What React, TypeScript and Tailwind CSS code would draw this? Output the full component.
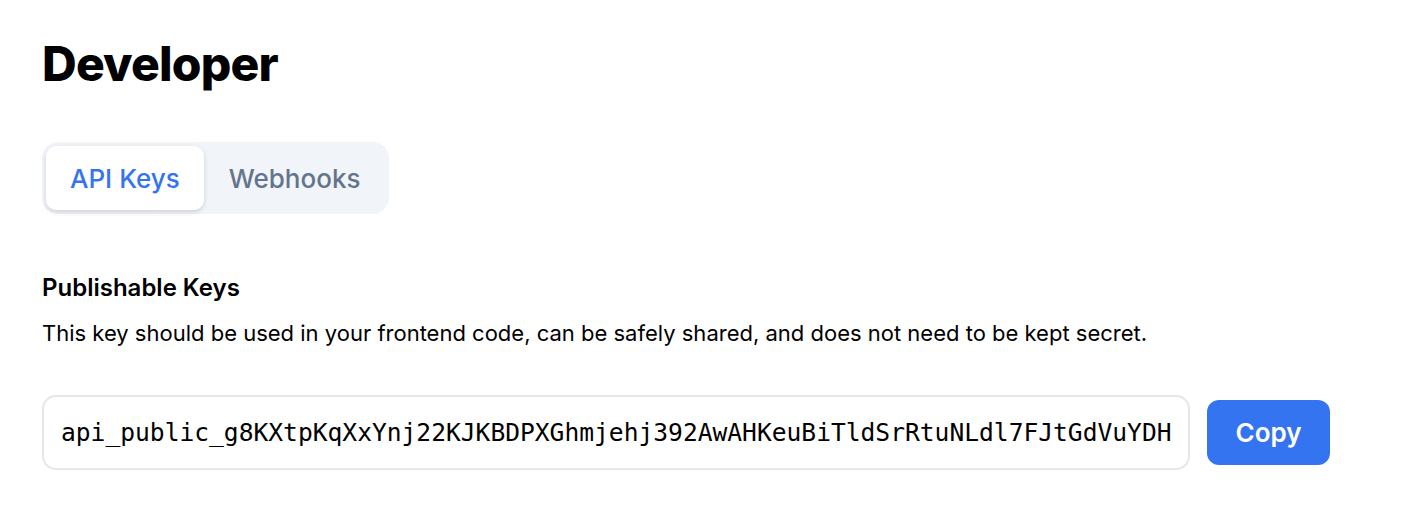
import { useState } from 'react';

const API_KEY = 'api_public_g8KXtpKqXxYnj22KJKBDPXGhmjehj392AwAHKeuBiTldSrRtuNLdl7FJtGdVuYDH';

const App = () => {
  const [tab, setTab] = useState<'keys' | 'webhooks'>('keys');

  return (
    <div className="min-h-screen bg-white px-[42px] pt-[40px] font-['Inter',sans-serif] text-black">
      {/* Header */}
      <h1 className="text-[48px] leading-[48px] font-extrabold tracking-[-0.8px]">Developer</h1>

      {/* Tabs */}
      <div className="mt-[54px] inline-flex rounded-[16px] bg-[#f1f4f9] p-[4px]">
        <button
          onClick={() => setTab('keys')}
          className={`h-[64px] rounded-[10px] px-[24px] text-[26px] font-medium ${
            tab === 'keys'
              ? 'bg-white text-[#3574f0] shadow-[0_2px_5px_rgba(0,0,0,0.15)]'
              : 'text-[#64748b]'
          }`}
        >
          API Keys
        </button>
        <button
          onClick={() => setTab('webhooks')}
          className={`h-[64px] rounded-[10px] px-[25px] text-[26px] font-medium ${
            tab === 'webhooks'
              ? 'bg-white text-[#3574f0] shadow-[0_2px_5px_rgba(0,0,0,0.15)]'
              : 'text-[#64748b]'
          }`}
        >
          Webhooks
        </button>
      </div>

      {/* Publishable keys */}
      <div className="mt-[58px]">
        <h2 className="text-[24px] leading-[32px] font-semibold">Publishable Keys</h2>
        <p className="mt-[14px] text-[22px] leading-[30px]">
          This key should be used in your frontend code, can be safely shared, and does not need to be kept secret.
        </p>

        <div className="mt-[47px] flex items-center gap-[17px]">
          <input
            readOnly
            value={API_KEY}
            className="h-[75px] w-[1148px] rounded-[14px] border-2 border-[#e5e7eb] px-[17px] font-['DejaVu_Sans_Mono',monospace] text-[24.6px] text-black outline-none"
          />
          <button
            onClick={() => navigator.clipboard?.writeText(API_KEY)}
            className="h-[65px] w-[123px] rounded-[12px] bg-[#3574f0] text-[26px] font-semibold text-white"
          >
            Copy
          </button>
        </div>
      </div>
    </div>
  );
};

export default App;
